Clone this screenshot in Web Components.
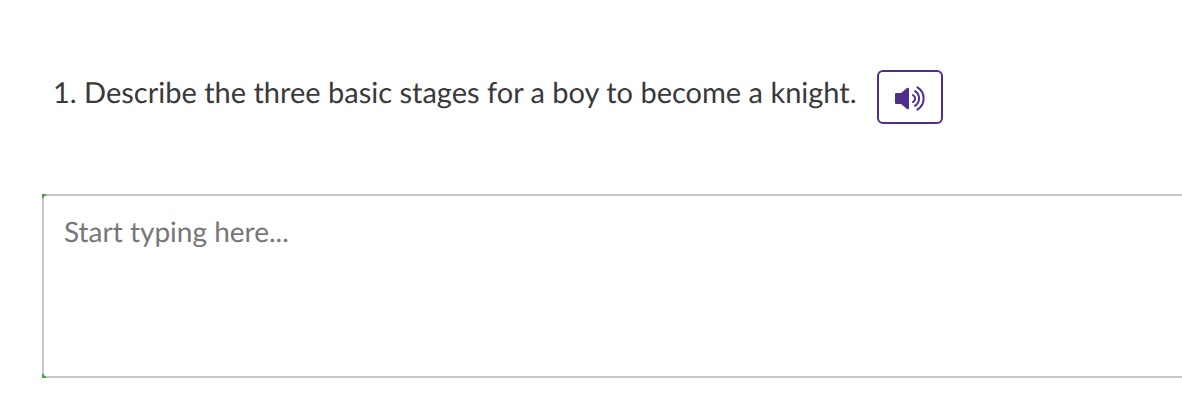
<!DOCTYPE html>
<html lang="en">
<head>
<meta charset="utf-8">
<title>Question</title>
<style>
body { margin: 0; background: #fff; color: #3a3a3a; font-family: Lato, sans-serif; text-rendering: geometricPrecision; overflow-x: hidden; }
</style>
</head>
<body>
<quiz-question>
  <span slot="prompt">1. Describe the three basic stages for a boy to become a knight.</span>
  <speak-button slot="action"></speak-button>
  <answer-box slot="answer"></answer-box>
</quiz-question>
<script>
class QuizQuestion extends HTMLElement {
  constructor() {
    super();
    this.attachShadow({ mode: "open" }).innerHTML = `
      <style>
        :host { display: block; padding: 70px 0 28px 42px; }
        .prompt { display: flex; align-items: flex-start; gap: 20px; padding-left: 11px; margin-bottom: 70px; font-size: 29px; line-height: 46px; }
      </style>
      <div class="prompt"><slot name="prompt"></slot><slot name="action"></slot></div>
      <slot name="answer"></slot>`;
  }
}
class SpeakButton extends HTMLElement {
  constructor() {
    super();
    this.attachShadow({ mode: "open" }).innerHTML = `
      <style>
        :host { display: block; flex: none; }
        button { display: flex; align-items: center; justify-content: center; box-sizing: border-box; width: 66px; height: 54px; padding: 2px 0 0; border: 2px solid #4f2d8c; border-radius: 6px; background: #fff; color: #4f2d8c; }
        svg { display: block; }
      </style>
      <button type="button" aria-label="Read aloud">
        <svg width="32" height="28" viewBox="0 0 32 28" aria-hidden="true">
          <path fill="currentColor" d="M1 10Q1 9 2 9H7L13 4Q15 3 15 5V24Q15 26 13 25L7 20H2Q1 20 1 19Z"/>
          <g fill="none" stroke="currentColor" stroke-width="2" stroke-linecap="round">
            <path d="M19 11A4 4 0 0 1 19 18M21 7.2A8.6 8.6 0 0 1 21 21.8M23.4 3.4A13 13 0 0 1 23.4 25.6"/>
          </g>
        </svg>
      </button>`;
  }
}
class AnswerBox extends HTMLElement {
  constructor() {
    super();
    this.attachShadow({ mode: "open" }).innerHTML = `
      <style>
        :host { display: block; position: relative; }
        textarea { display: block; box-sizing: border-box; width: 100%; height: 184px; padding: 18px 20px; border: 2px solid #c8c8c8; border-right: 0; border-radius: 0; outline: 0; resize: none; background: #fff; color: #3a3a3a; font: 28px/34px Lato, sans-serif; text-rendering: inherit; }
        textarea::placeholder { color: #777; opacity: 1; }
        i { position: absolute; left: 0; width: 5px; height: 5px; background: #4a9f49; }
        .top { top: 0; clip-path: polygon(0 0, 100% 0, 0 100%); }
        .bottom { bottom: 0; clip-path: polygon(0 0, 100% 100%, 0 100%); }
      </style>
      <textarea aria-label="Your answer" placeholder="Start typing here..."></textarea>
      <i class="top"></i><i class="bottom"></i>`;
  }
}
customElements.define("quiz-question", QuizQuestion);
customElements.define("speak-button", SpeakButton);
customElements.define("answer-box", AnswerBox);
</script>
</body>
</html>
